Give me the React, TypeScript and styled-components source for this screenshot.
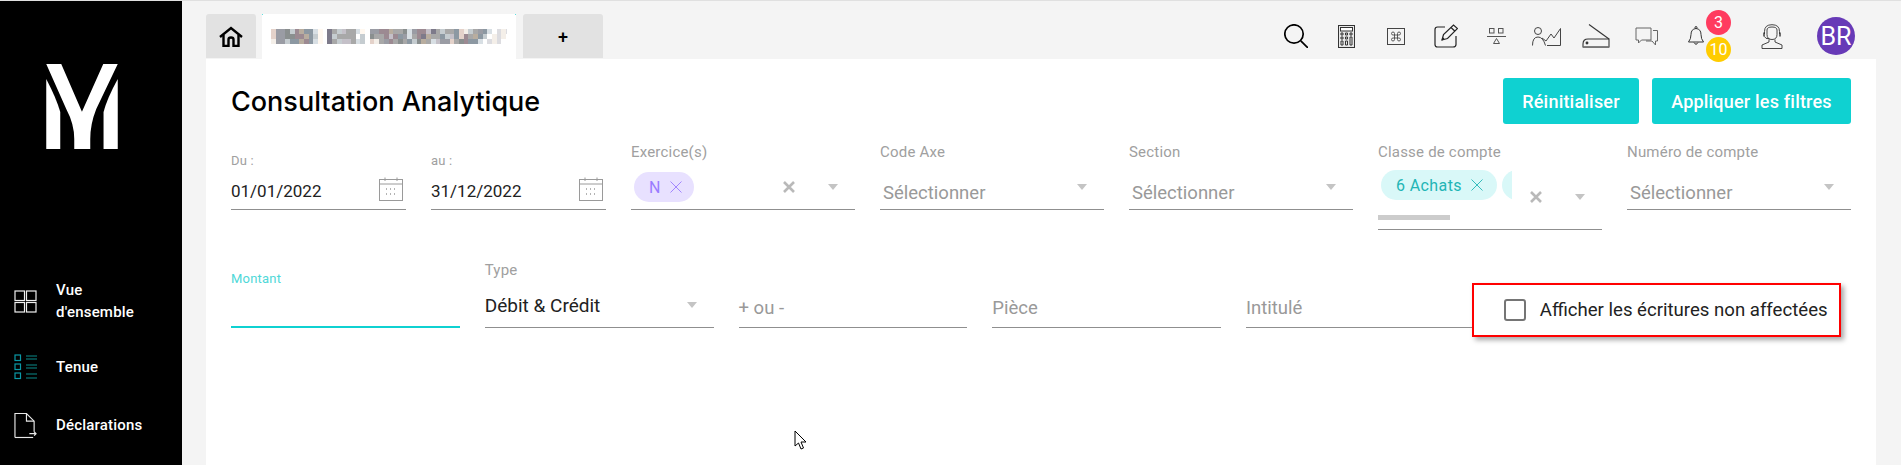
import React from 'react';
import styled, { createGlobalStyle } from 'styled-components';

const GlobalStyle = createGlobalStyle`
  html, body {
    margin: 0;
    padding: 0;
    height: 465px;
    overflow: hidden;
    background: #f4f4f4;
    font-family: Roboto, "Liberation Sans", sans-serif;
  }
`;

const Page = styled.div`
  position: relative;
  display: flex;
  width: 1901px;
  height: 465px;
  border-top: 1px solid #e0e0e0;
  box-sizing: border-box;
  overflow: hidden;
`;

const Sidebar = styled.aside`
  flex: 0 0 182px;
  display: flex;
  flex-direction: column;
  background: #000;
  color: #fff;
`;

const LogoWrap = styled.div`
  height: 200px;
  padding: 63px 0 0 46px;
  svg { display: block; }
`;

const NavList = styled.nav`
  display: flex;
  flex-direction: column;
`;

const NavItem = styled.div<{ $height: number }>`
  display: flex;
  align-items: center;
  gap: 19px;
  height: ${(p) => p.$height}px;
  padding-left: 14px;
  font-size: 15px;
  font-weight: 500;
  line-height: 22px;
  letter-spacing: 0.2px;
  svg { flex: 0 0 23px; }
`;

const Main = styled.main`
  flex: 1;
  display: flex;
  flex-direction: column;
  padding: 0 25px 0 24px;
  min-width: 0;
`;

const TopBar = styled.header`
  display: flex;
  align-items: flex-end;
  justify-content: space-between;
  height: 58px;
`;

const Tabs = styled.div`
  display: flex;
  align-items: flex-start;
  gap: 6px;
`;

const Tab = styled.div<{ $width: number }>`
  display: flex;
  align-items: center;
  justify-content: center;
  box-sizing: border-box;
  width: ${(p) => p.$width}px;
  height: 44px;
  background: #e2e2e2;
  border-radius: 3px 3px 0 0;
  color: #000;
  font-size: 18px;
  font-weight: 500;
`;

const ActiveTab = styled(Tab)`
  position: relative;
  height: 45px;
  margin-right: 1px;
  background: #fff;
  border-radius: 0;

  &::before,
  &::after {
    content: '';
    position: absolute;
    top: 0;
    width: 1px;
    height: 1px;
    background: #5fe0e0;
  }
  &::before { left: 0; }
  &::after { right: 0; }
`;

const Tools = styled.div`
  display: flex;
  align-items: center;
  height: 57px;
  margin-right: 8px;
`;

const ToolSlot = styled.div<{ $width?: number; $before?: number }>`
  position: relative;
  display: flex;
  align-items: center;
  justify-content: center;
  width: ${(p) => p.$width ?? 50}px;
  height: 100%;
  margin-left: ${(p) => p.$before ?? 0}px;
  padding-top: 11px;
  box-sizing: border-box;
`;

const Badge = styled.span<{ $bg: string; $top: number }>`
  position: absolute;
  left: 35px;
  top: ${(p) => p.$top}px;
  display: flex;
  align-items: center;
  justify-content: center;
  width: 25px;
  height: 25px;
  border-radius: 50%;
  background: ${(p) => p.$bg};
  color: #fff;
  font-size: 16px;
`;

const Avatar = styled.div`
  display: flex;
  align-items: center;
  justify-content: center;
  width: 38px;
  height: 38px;
  border-radius: 50%;
  background: #673ab7;
  color: #fff;
  font-size: 25px;
`;

const Panel = styled.section`
  flex: 1;
  padding: 19px 25px 0;
  background: #fff;
`;

const PanelHead = styled.div`
  display: flex;
  align-items: center;
  justify-content: space-between;
  height: 46px;
  margin-bottom: 20px;
`;

const Title = styled.h1`
  margin: 0;
  font-family: Inter, Roboto, sans-serif;
  font-size: 27px;
  font-weight: 500;
  color: #000;
`;

const Actions = styled.div`
  display: flex;
  gap: 13px;
`;

const ActionButton = styled.button<{ $width: number }>`
  width: ${(p) => p.$width}px;
  height: 46px;
  border: 0;
  border-radius: 3px;
  background: #0fd1d1;
  color: #fff;
  font-family: Roboto, sans-serif;
  font-size: 18px;
  font-weight: 500;
  letter-spacing: 0.2px;
`;

const FieldRow = styled.div<{ $height: number; $mb?: number }>`
  display: flex;
  align-items: flex-end;
  gap: 25px;
  height: ${(p) => p.$height}px;
  margin-bottom: ${(p) => p.$mb ?? 0}px;
`;

const TopRow = styled(FieldRow)`
  align-items: flex-start;
`;

const Field = styled.div<{ $width: number; $mt?: number }>`
  display: flex;
  flex-direction: column;
  flex: 0 0 ${(p) => p.$width}px;
  min-width: 0;
  margin-top: ${(p) => p.$mt ?? 0}px;
`;

const Label = styled.label<{ $accent?: boolean; $small?: boolean }>`
  display: block;
  height: 16px;
  font-size: ${(p) => (p.$small ? 13 : 15)}px;
  line-height: 16px;
  letter-spacing: 0.2px;
  color: ${(p) => (p.$accent ? '#4fd8d8' : '#a0a0a0')};
`;

const Control = styled.div<{ $height: number; $accent?: boolean; $pt?: number }>`
  display: flex;
  align-items: center;
  box-sizing: border-box;
  height: ${(p) => p.$height}px;
  padding-top: ${(p) => p.$pt ?? 0}px;
  border-bottom: ${(p) => (p.$accent ? '2px solid #0fd1d1' : '1px solid #8f8f8f')};
`;

const Value = styled.span<{ $size?: number; $nudge?: number }>`
  margin-top: ${(p) => p.$nudge ?? 0}px;
  font-size: ${(p) => p.$size ?? 17}px;
  color: #222;
`;

const Placeholder = styled.span`
  font-size: 18.5px;
  color: #999;
`;

const SelectText = styled(Placeholder)`
  margin: 12px 0 0 3px;
`;

const Clear = styled.span`
  display: flex;
  margin-left: auto;
`;

const Caret = styled.span<{ $auto?: boolean }>`
  flex: 0 0 auto;
  width: 0;
  height: 0;
  margin-left: ${(p) => (p.$auto ? 'auto' : '33px')};
  margin-right: 17px;
  border-left: 5px solid transparent;
  border-right: 5px solid transparent;
  border-top: 6px solid #c4c4c4;
`;

const DateIcon = styled.svg`
  margin-left: auto;
  margin-right: 3px;
`;

const Chip = styled.span<{ $tone: 'violet' | 'teal'; $width: number }>`
  display: inline-flex;
  flex: 0 0 auto;
  align-items: center;
  gap: 9px;
  box-sizing: border-box;
  width: ${(p) => p.$width}px;
  height: 30px;
  padding-left: 15px;
  border-radius: 15px;
  font-size: 16px;
  letter-spacing: 0.4px;
  background: ${(p) => (p.$tone === 'violet' ? '#e8e1ff' : '#d9f8f8')};
  color: ${(p) => (p.$tone === 'violet' ? '#9a7cff' : '#22b5b5')};
`;

const ChipSpot = styled.div`
  display: flex;
  padding-left: 3px;
`;

const ChipScroller = styled.div`
  display: flex;
  flex-direction: column;
  flex: 0 0 134px;
  width: 134px;
  height: 100%;
  padding-top: 5px;
  box-sizing: border-box;
  overflow: hidden;
`;

const ChipTrack = styled.div`
  display: flex;
  gap: 5px;
  padding-left: 3px;
`;

const ScrollThumb = styled.div`
  width: 72px;
  height: 5px;
  margin-top: 15px;
  background: #cccccc;
`;

const CheckPanel = styled.div`
  display: flex;
  align-items: center;
  gap: 14px;
  flex: 0 0 369px;
  box-sizing: border-box;
  height: 54px;
  margin: 0 0 -9px -28px;
  padding-left: 30px;
  border: 2px solid #ff0000;
  background: #fff;
  box-shadow: 3px 3px 5px rgba(0, 0, 0, 0.35);
  position: relative;
`;

const CheckBox = styled.span`
  flex: 0 0 auto;
  box-sizing: border-box;
  width: 22px;
  height: 22px;
  border: 2px solid #757575;
  border-radius: 3px;
`;

const CheckLabel = styled.span`
  font-size: 18.6px;
  white-space: nowrap;
  color: #222;
`;

const Pointer = styled.svg`
  position: absolute;
  left: 794px;
  top: 429px;
`;

const PIXELS = [
  'abbcdefgghi jkdlkkhi bbeefkkchbeeljkdkkgamdkbgh nmn',
  'abbcceefgdi jdkkkkod ckkelegbhkejfkkgdlgaekfgd mnm',
  'mbbdggfeghi jkdllkhd amkbekckgdcfkhlbbakceggh nmn',
];

const PALETTE: Record<string, string> = {
  a: '#e4d2ca', b: '#9a9ca4', c: '#8a8f8f', d: '#c5ccd0', e: '#9c8a92',
  f: '#b8ad9f', g: '#8c98a2', h: '#d8dfe4', i: '#fff8f0', j: '#7d7a8a',
  k: '#a8a8a8', l: '#c4c0c8', m: '#f4efe9', n: '#dcdce0', o: '#ffffff',
};

const Blurred = () => (
  <svg width="236" height="15" shapeRendering="crispEdges">
    {PIXELS.map((row, y) =>
      row.split('').map((c, x) =>
        PALETTE[c] ? (
          <rect key={`${x}-${y}`} x={x * 4.7} y={y * 5} width="4.8" height="5" fill={PALETTE[c]} />
        ) : null,
      ),
    )}
  </svg>
);

const Logo = () => (
  <svg width="72" height="85" viewBox="0 0 71.5 85" fill="#fff">
    <path d="M0 0H15L35.7 47.7 57 0H71.5L50 45Q44 60 44 75V85H28V75Q28 60 20 45Z" />
    <path d="M0 15V85H14V48Q10 34 0 15Z" />
    <path d="M71.5 15V85H57.3V48Q61 34 71.5 15Z" />
  </svg>
);

const OverviewIcon = () => (
  <svg width="23" height="23" viewBox="0 0 23 23" fill="none" stroke="#f0f0f0" strokeWidth="1.2">
    <rect x="1" y="1" width="9.5" height="9.5" />
    <rect x="12.5" y="1" width="9.5" height="9.5" />
    <rect x="1" y="12.5" width="9.5" height="9.5" />
    <rect x="12.5" y="12.5" width="9.5" height="9.5" />
  </svg>
);

const ListIcon = () => (
  <svg width="23" height="26" viewBox="0 0 23 26" fill="none" stroke="#0a99a6" strokeWidth="1.2">
    <rect x="1" y="1" width="5.5" height="5.5" />
    <rect x="1" y="10" width="5.5" height="5.5" />
    <rect x="1" y="19" width="5.5" height="5.5" />
    <path d="M12 2h11M12 5h11M12 11h11M12 14h11M12 20h11M12 24h11" stroke="#0a8a8a" />
  </svg>
);

const DeclarationIcon = () => (
  <svg width="24" height="27" viewBox="0 0 24 27" fill="none" stroke="#e8e8e8" strokeWidth="1.2">
    <path d="M1 26V1H13L21 9V20" />
    <path d="M13 1V9H21" />
    <path d="M1 26H20" />
    <path d="M16 22H23M21 20l2 2-2 2" />
  </svg>
);

const HomeIcon = () => (
  <svg width="24" height="21" viewBox="0 0 24 21" fill="none" stroke="#000" strokeWidth="2.4">
    <path d="M1 11L12 2 23 11" />
    <path d="M4.5 9V20H9.5V13.5Q9.5 11.5 12 11.5T14.5 13.5V20H19.5V9" />
  </svg>
);

const SearchIcon = () => (
  <svg width="24" height="24" viewBox="0 0 24 24" fill="none" stroke="#000" strokeWidth="1.7">
    <circle cx="10" cy="10" r="9.2" />
    <path d="M16.8 16.8L24 24" />
  </svg>
);

const CalculatorIcon = () => (
  <svg width="17" height="23" viewBox="0 0 17 23" fill="none" stroke="#333" strokeWidth="1">
    <rect x="0.5" y="0.5" width="16" height="22" fill="#e8e8e8" />
    <rect x="2.5" y="2.5" width="12" height="3.5" fill="#fff" />
    <path d="M3 8h2v2H3zM7.5 8h2v2h-2zM12 8h2v2h-2zM3 12h2v2H3zM7.5 12h2v2h-2zM12 12h2v8h-2zM3 16h2v4H3zM7.5 16h2v4h-2z" />
  </svg>
);

const CommandIcon = () => (
  <svg width="18" height="17" viewBox="0 0 18 17" fill="none" stroke="#444" strokeWidth="1">
    <rect x="0.5" y="0.5" width="17" height="16" />
    <g transform="translate(3 2.5) scale(0.5)" strokeWidth="1.7">
      <path d="M15 6v12a3 3 0 1 0 3-3H6a3 3 0 1 0 3 3V6a3 3 0 1 0-3 3h12a3 3 0 1 0-3-3" />
    </g>
  </svg>
);

const EditIcon = () => (
  <svg width="24" height="24" viewBox="0 0 24 24" fill="none" stroke="#222" strokeWidth="1.2">
    <path d="M11 3H3.5Q1 3 1 5.5V20.5Q1 23 3.5 23H19Q22 23 22 20.5V12" />
    <path d="M8 16L9.5 10.5 19.5 1 23.5 4.5 13.5 14.5Z" />
    <path d="M17 3.5L21 7.2M8 16l2-2" />
  </svg>
);

const BalanceIcon = () => (
  <svg width="19" height="16" viewBox="0 0 19 16" fill="none" stroke="#555" strokeWidth="1">
    <rect x="2.5" y="0.5" width="4.5" height="4.5" />
    <rect x="11.5" y="0.5" width="4.5" height="4.5" />
    <path d="M0 8.5H19" />
    <path d="M9.5 10.5L6.5 15.5H12.5Z" />
  </svg>
);

const PeopleChartIcon = () => (
  <svg width="29" height="19" viewBox="0 0 29 19" fill="none" stroke="#444" strokeWidth="1">
    <circle cx="6" cy="4" r="3.5" />
    <path d="M0.5 18.5Q0.5 10 6 10 11 10 13.5 18.5" />
    <path d="M10 11L14 14 19 7 22 11 28.5 1.5V18.5H15" />
  </svg>
);

const ScannerIcon = () => (
  <svg width="28" height="24" viewBox="0 0 28 24" fill="none" stroke="#333" strokeWidth="1.1">
    <path d="M7 0.5L27 15" />
    <path d="M27 15H6Q1 15 1 20V23H27Z" />
    <path d="M1 23.2H27" stroke="#777" strokeWidth="1.8" />
    <circle cx="5" cy="19" r="0.9" fill="#333" />
  </svg>
);

const ChatIcon = () => (
  <svg width="23" height="19" viewBox="0 0 23 19" fill="none" stroke="#666" strokeWidth="1">
    <path d="M1 1H16V13H6.5L3.5 16V13H1Z" />
    <path d="M18 3.5H22.5V14H20.5V18L17 14H11" />
  </svg>
);

const BellIcon = () => (
  <svg width="16" height="20" viewBox="0 0 16 20" fill="none" stroke="#333" strokeWidth="1">
    <path d="M8 2.5Q3 3 3 8.5 3 13 0.5 16H15.5Q13 13 13 8.5 13 3 8 2.5Z" />
    <circle cx="8" cy="1.5" r="1" />
    <path d="M6 16.5Q8 20 10 16.5" />
  </svg>
);

const HeadsetIcon = () => (
  <svg width="22" height="25" viewBox="0 0 22 25" fill="none" stroke="#333" strokeWidth="0.9">
    <path d="M3.5 10V7.5Q3.5 0.7 11 0.7T18.5 7.5V10" />
    <path d="M3 8.5V12.5M19 8.5V12.5" strokeWidth="1.4" />
    <path d="M6 6Q6 3 11 3T16 6V10.5Q16 15.5 11 15.5T6 10.5Z" />
    <path d="M3.5 12.5Q4 15 8.5 14.8" />
    <path d="M8 15.5V18L1 21V24.5H21V21L14 18V15.5" />
  </svg>
);

const CalendarIcon = () => (
  <DateIcon width="24" height="24" viewBox="0 0 24 24" fill="none" stroke="#9a9a9a" strokeWidth="1">
    <rect x="0.5" y="2.5" width="23" height="21" />
    <path d="M0.5 7H23.5M6 0.5V4M18 0.5V4" />
    <path d="M7 12h2M11 12h2M15 12h2M7 17h2M11 17h2M15 17h2" strokeWidth="1.4" strokeDasharray="1 1" />
  </DateIcon>
);

const ThinCross = () => (
  <svg width="12" height="12" viewBox="0 0 12 12" fill="none" stroke="currentColor" strokeWidth="0.9">
    <path d="M0.5 0.5L11.5 11.5M11.5 0.5L0.5 11.5" />
  </svg>
);

const BoldCross = () => (
  <svg width="12" height="12" viewBox="0 0 12 12" fill="none" stroke="#b9b9b9" strokeWidth="2.6">
    <path d="M1 1L11 11M11 1L1 11" />
  </svg>
);

const tools = [
  <SearchIcon key="search" />,
  <CalculatorIcon key="calc" />,
  <CommandIcon key="cmd" />,
  <EditIcon key="edit" />,
  <BalanceIcon key="balance" />,
  <PeopleChartIcon key="people" />,
  <ScannerIcon key="scan" />,
  <ChatIcon key="chat" />,
];

const SelectField = ({ label }: { label: string }) => (
  <Field $width={224}>
    <Label>{label}</Label>
    <Control $height={50} $pt={5}>
      <SelectText>Sélectionner</SelectText>
      <Caret $auto />
    </Control>
  </Field>
);

const DateField = ({ label, value }: { label: string; value: string }) => (
  <Field $width={175} $mt={9}>
    <Label $small>{label}</Label>
    <Control $height={41}>
      <Value $nudge={4}>{value}</Value>
      <CalendarIcon />
    </Control>
  </Field>
);

export default function App() {
  return (
    <Page>
      <GlobalStyle />
      <Sidebar>
        <LogoWrap>
          <Logo />
        </LogoWrap>
        <NavList>
          <NavItem $height={74}>
            <OverviewIcon />
            <span>
              Vue
              <br />
              d'ensemble
            </span>
          </NavItem>
          <NavItem $height={58}>
            <ListIcon />
            <span>Tenue</span>
          </NavItem>
          <NavItem $height={58}>
            <DeclarationIcon />
            <span>Déclarations</span>
          </NavItem>
        </NavList>
      </Sidebar>

      <Main>
        <TopBar>
          <Tabs>
            <Tab $width={50}>
              <HomeIcon />
            </Tab>
            <ActiveTab $width={254}>
              <Blurred />
            </ActiveTab>
            <Tab $width={80}>+</Tab>
          </Tabs>
          <Tools>
            {tools.map((icon) => (
              <ToolSlot key={icon.key}>{icon}</ToolSlot>
            ))}
            <ToolSlot>
              <BellIcon />
              <Badge $bg="#ff3b5f" $top={8}>3</Badge>
              <Badge $bg="#ffcc00" $top={35}>10</Badge>
            </ToolSlot>
            <ToolSlot $width={64} $before={19}>
              <HeadsetIcon />
            </ToolSlot>
            <ToolSlot $width={64}>
              <Avatar>BR</Avatar>
            </ToolSlot>
          </Tools>
        </TopBar>

        <Panel>
          <PanelHead>
            <Title>Consultation Analytique</Title>
            <Actions>
              <ActionButton $width={136}>Réinitialiser</ActionButton>
              <ActionButton $width={199}>Appliquer les filtres</ActionButton>
            </Actions>
          </PanelHead>

          <TopRow $height={86} $mb={32}>
            <DateField label="Du :" value="01/01/2022" />
            <DateField label="au :" value="31/12/2022" />
            <Field $width={224}>
              <Label>Exercice(s)</Label>
              <Control $height={50} $pt={5}>
                <ChipSpot>
                  <Chip $tone="violet" $width={60}>
                    N <ThinCross />
                  </Chip>
                </ChipSpot>
                <Clear>
                  <BoldCross />
                </Clear>
                <Caret />
              </Control>
            </Field>
            <SelectField label="Code Axe" />
            <SelectField label="Section" />
            <Field $width={224}>
              <Label>Classe de compte</Label>
              <Control $height={70} $pt={5}>
                <ChipScroller>
                  <ChipTrack>
                    <Chip $tone="teal" $width={116}>
                      6 Achats <ThinCross />
                    </Chip>
                    <Chip $tone="teal" $width={116} />
                  </ChipTrack>
                  <ScrollThumb />
                </ChipScroller>
                <Clear>
                  <BoldCross />
                </Clear>
                <Caret />
              </Control>
            </Field>
            <SelectField label="Numéro de compte" />
          </TopRow>

          <FieldRow $height={66}>
            <Field $width={228.75}>
              <Label $accent $small>Montant</Label>
              <Control $height={41} $accent />
            </Field>
            <Field $width={228.75}>
              <Label>Type</Label>
              <Control $height={50} $pt={5}>
                <Value $size={19}>Débit &amp; Crédit</Value>
                <Caret $auto />
              </Control>
            </Field>
            <Field $width={228.75}>
              <Control $height={40}>
                <Placeholder>+ ou -</Placeholder>
              </Control>
            </Field>
            <Field $width={228.75}>
              <Control $height={40}>
                <Placeholder>Pièce</Placeholder>
              </Control>
            </Field>
            <Field $width={228.75}>
              <Control $height={40}>
                <Placeholder>Intitulé</Placeholder>
              </Control>
            </Field>
            <CheckPanel>
              <CheckBox />
              <CheckLabel>Afficher les écritures non affectées</CheckLabel>
            </CheckPanel>
          </FieldRow>
        </Panel>
      </Main>

      <Pointer width="13" height="21" viewBox="0 0 13 21">
        <path d="M1 1V16L4.5 13 7 19 9.5 18 7 12H12Z" fill="#fff" stroke="#000" strokeWidth="1" />
      </Pointer>
    </Page>
  );
}
